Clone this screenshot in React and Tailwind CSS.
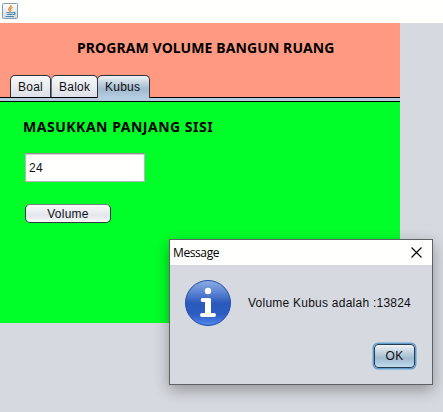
import React from "react";

const ui = "font-['Liberation_Sans',Arial,sans-serif] text-[12px] leading-[16px] tracking-[0.24px] text-[#101014] whitespace-nowrap";
const heading = "font-['Noto_Sans',Tahoma,sans-serif] text-[14px] leading-[18px] font-bold text-black whitespace-nowrap";

function JavaIcon() {
  return (
    <svg width="16" height="16" viewBox="0 0 16 16">
      <defs>
        <linearGradient id="tile" x1="0" y1="0" x2="0" y2="1">
          <stop offset="0" stopColor="#ffffff" />
          <stop offset="1" stopColor="#ccdce6" />
        </linearGradient>
      </defs>
      <rect x="0.5" y="0.5" width="15" height="15" rx="1" fill="url(#tile)" stroke="#8799a6" />
      <path d="M9.2 2C9.6 4 6.2 4.8 6.6 6.4C6.8 7.3 7.6 7.6 7.4 8.6M10.6 4.4C8.6 5.2 7.8 6.1 8.5 7C9 7.6 8.6 8.2 8.2 8.6" fill="none" stroke="#ee8a35" strokeWidth="1.2" />
      <path d="M4.2 9.7H11M5.2 11.5H10.3M3.5 13.5H12M11 9.5H12.8V11.5H10.8" fill="none" stroke="#4d84a8" strokeWidth="1.1" />
    </svg>
  );
}

function InfoIcon() {
  return (
    <svg width="46" height="46" viewBox="0 0 46 46">
      <defs>
        <linearGradient id="ball" x1="0" y1="0" x2="0" y2="1">
          <stop offset="0" stopColor="#8fabe4" />
          <stop offset="0.25" stopColor="#5f86d3" />
          <stop offset="0.5" stopColor="#2b5abc" />
          <stop offset="0.75" stopColor="#2c5cc3" />
          <stop offset="1" stopColor="#5288ee" />
        </linearGradient>
      </defs>
      <circle cx="23" cy="23" r="22.5" fill="url(#ball)" stroke="#244da5" />
      <circle cx="23" cy="11" r="3.2" fill="#fffffb" />
      <path d="M17.5 18H24.5Q26 18 26 19.5V33H29Q31 33 31 35Q31 37 29 37H17Q15 37 15 35Q15 33 17 33H20V22H17.5Q15.7 22 15.7 20Q15.7 18 17.5 18Z" fill="#fffffb" />
    </svg>
  );
}

function Tab({ label, className }) {
  return (
    <div className={`${ui} rounded-t-[5px] border border-b-0 border-[#30333b] pt-[3px] ${className}`}>
      {label}
    </div>
  );
}

function Dialog() {
  return (
    <div className="absolute left-[169px] top-[239px] flex h-[146px] w-[264px] flex-col border border-[#5e6265] bg-[#d6d9df] shadow-[0_5px_14px_0_rgba(0,0,0,0.32)]">
      <div className="flex h-[25px] shrink-0 items-center justify-between bg-[#fffffd] pl-[3px] pr-[10px]">
        <span className="font-['Open_Sans',sans-serif] text-[12px] leading-[16px] tracking-[-0.4px] text-black">Message</span>
        <svg width="11" height="11" viewBox="0 0 11 11">
          <path d="M0.5 0.5L10.5 10.5M10.5 0.5L0.5 10.5" stroke="#000" strokeWidth="1.1" />
        </svg>
      </div>
      <div className="flex items-center pl-[15px] pt-[15px]">
        <InfoIcon />
        <span className={`${ui} ml-[17px]`}>Volume Kubus adalah :13824</span>
      </div>
      <div className="mt-[18px] flex justify-end pr-[17px]">
        <button className={`${ui} h-[24px] w-[41px] rounded-[4px] border border-[#283d51] bg-linear-to-b from-[#eff3f6] via-[#a1bacf] via-60% to-[#bfdcef] shadow-[0_0_0_1.5px_#609dd0]`}>
          OK
        </button>
      </div>
    </div>
  );
}

export default function App() {
  return (
    <div className="relative h-[412px] w-[443px] overflow-hidden bg-[#d6d9df]">
      <header className="flex h-[23px] bg-[#fffffd] pl-[2px] pt-[3px]">
        <JavaIcon />
      </header>
      <main className="w-[400px]">
        <section className="flex h-[74px] flex-col justify-between bg-[#ff9982]">
          <h1 className={`${heading} pl-[77px] pt-[16px] tracking-[0.1px]`}>PROGRAM VOLUME BANGUN RUANG</h1>
          <div className="flex h-[22px] pl-[10px]">
            <Tab label="Boal" className="w-[41px] bg-linear-to-b from-[#f7f8fa] to-[#dcdfe5] pl-[7px]" />
            <Tab label="Balok" className="w-[47px] border-l-[#70747b] bg-linear-to-b from-[#f7f8fa] to-[#dcdfe5] pl-[7px]" />
            <Tab label="Kubus" className="z-10 -ml-px h-[23px] w-[53px] bg-linear-to-b from-[#edf2f6] via-[#a1bacf] via-60% to-[#b5cee2] pl-[7px]" />
          </div>
        </section>
        <div className="h-[5px] border-y border-black bg-[#b2cde2]" />
        <section className="flex h-[221px] flex-col items-start bg-[#00ff28]">
          <h2 className={`${heading} pl-[23px] pt-[16px] tracking-[0.52px]`}>MASUKKAN PANJANG SISI</h2>
          <div className={`${ui} ml-[25px] mt-[17px] flex h-[29px] w-[120px] items-center border border-[#b7b7b7] border-t-[#8d8d8d] bg-[#fffffd] pl-[3px] shadow-[inset_0_1px_0_#d6d6d6]`}>24</div>
          <button className={`${ui} ml-[25px] mt-[22px] h-[19px] w-[86px] rounded-[5px] border border-[#343a42] border-t-[#777e86] bg-linear-to-b from-[#fafbfc] via-[#e3e6ec] via-60% to-[#fafbff]`}>Volume</button>
        </section>
      </main>
      <Dialog />
    </div>
  );
}
